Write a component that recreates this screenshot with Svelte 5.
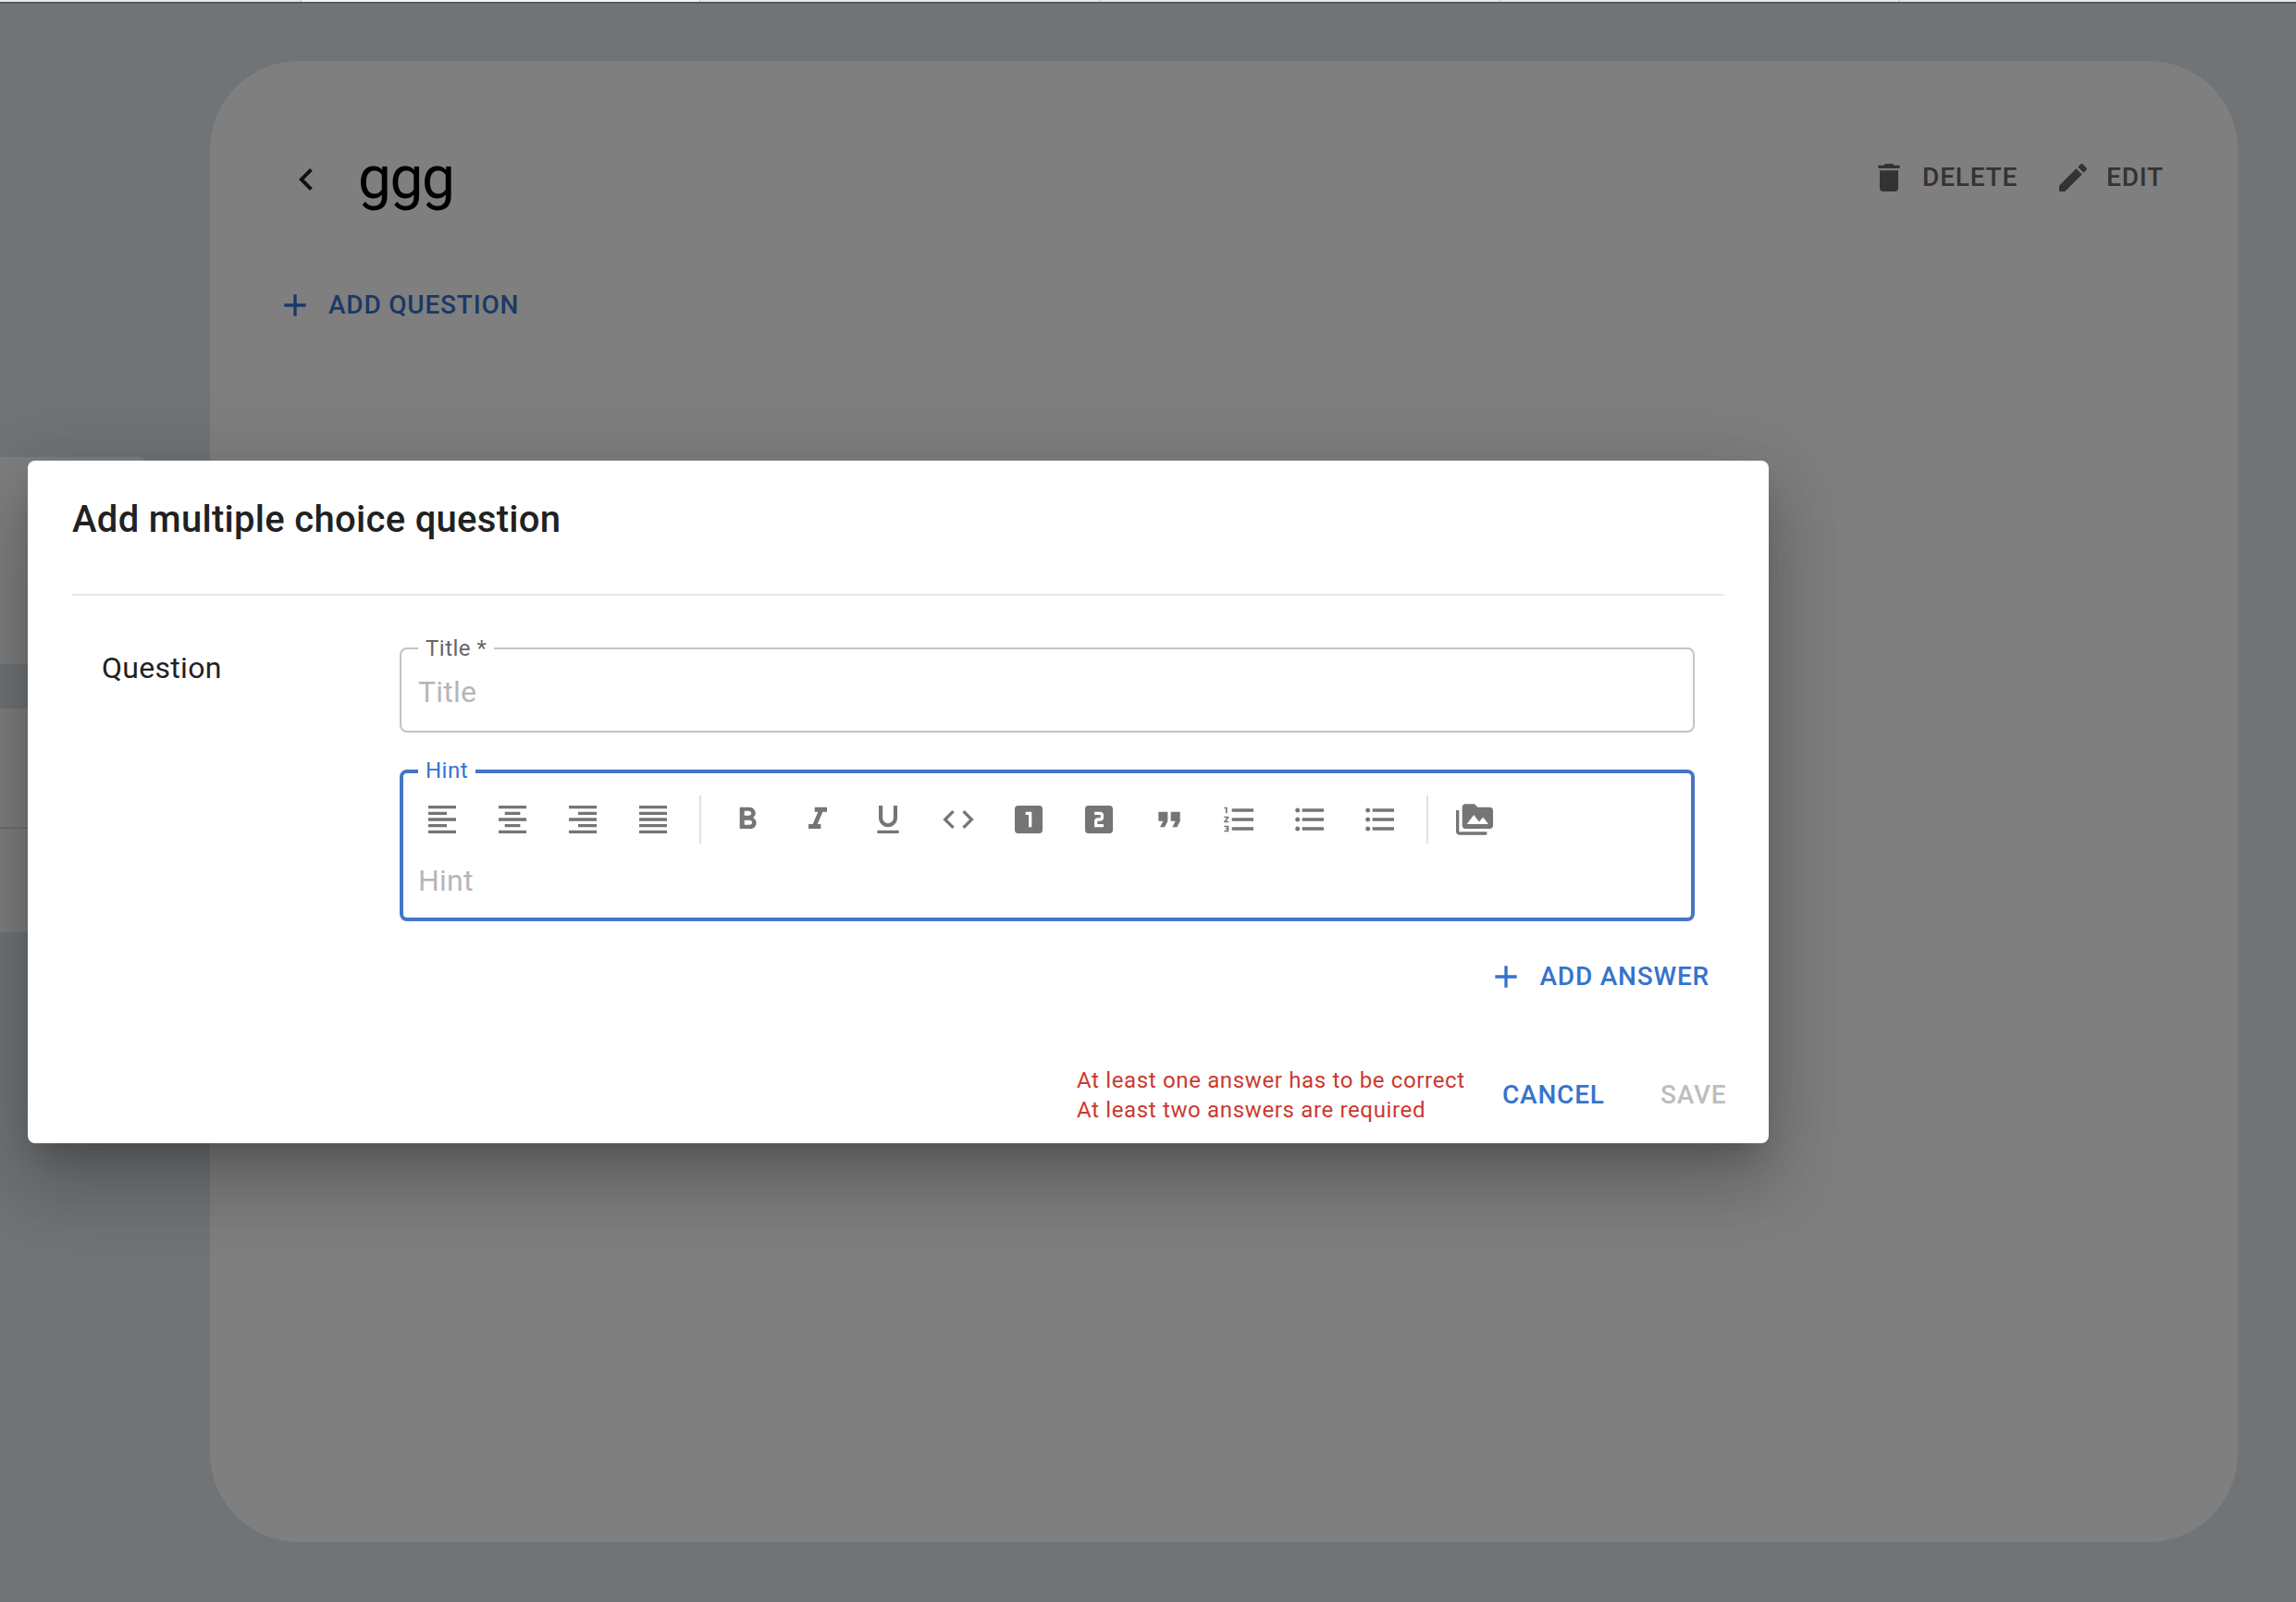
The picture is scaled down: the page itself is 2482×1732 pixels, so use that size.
<script>
  const icons = {
    back: 'M15.41 7.41 14 6l-6 6 6 6 1.41-1.41L10.83 12z',
    add: 'M19 13h-6v6h-2v-6H5v-2h6V5h2v6h6v2z',
    remove: 'M6 19c0 1.1.9 2 2 2h8c1.1 0 2-.9 2-2V7.4H6V19zM19 4h-3.5c-.5-.6-1-1-1.8-1h-3.4c-.8 0-1.3.4-1.8 1H5v2h14V4z',
    edit: 'M3 17.25V21h3.75L17.81 9.94l-3.75-3.75L3 17.25zM20.71 7.04c.39-.39.39-1.02 0-1.41l-2.34-2.34c-.39-.39-1.02-.39-1.41 0l-1.83 1.83 3.75 3.75 1.83-1.83z',
    media: 'M2 6H0v5h.01L0 20c0 1.1.9 2 2 2h18v-2H2V6zm20-2h-8l-2-2H6c-1.1 0-1.99.9-1.99 2L4 16c0 1.1.9 2 2 2h16c1.1 0 2-.9 2-2V6c0-1.1-.9-2-2-2zM7 15l4.5-6 3.5 4.51 2.5-3.01L21 15H7z'
  };
  const bullets = 'M4 10.5c-.83 0-1.5.67-1.5 1.5s.67 1.5 1.5 1.5 1.5-.67 1.5-1.5-.67-1.5-1.5-1.5zm0-6c-.83 0-1.5.67-1.5 1.5S3.17 7.5 4 7.5 5.5 6.83 5.5 6 4.83 4.5 4 4.5zm0 12c-.83 0-1.5.68-1.5 1.5s.68 1.5 1.5 1.5 1.5-.68 1.5-1.5-.67-1.5-1.5-1.5zM7 19h14v-2H7v2zm0-6h14v-2H7v2zm0-8v2h14V5H7z';
  const alignTools = [
    ['Align left', 'M15 15H3v2h12v-2zm0-8H3v2h12V7zM3 13h18v-2H3v2zm0 8h18v-2H3v2zM3 3v2h18V3H3z'],
    ['Align center', 'M7 15v2h10v-2H7zm-4 6h18v-2H3v2zm0-8h18v-2H3v2zm4-6v2h10V7H7zM3 3v2h18V3H3z'],
    ['Align right', 'M3 21h18v-2H3v2zm6-4h12v-2H9v2zm-6-4h18v-2H3v2zm6-4h12V7H9v2zM3 3v2h18V3H3z'],
    ['Justify', 'M3 21h18v-2H3v2zm0-4h18v-2H3v2zm0-4h18v-2H3v2zm0-4h18V7H3v2zm0-6v2h18V3H3z']
  ];
  const formatTools = [
    ['Bold', 'M15.6 10.79c.97-.67 1.65-1.77 1.65-2.79 0-2.26-1.75-4-4-4H7v14h7.04c2.09 0 3.71-1.7 3.71-3.79 0-1.52-.86-2.82-2.15-3.42zM10 6.5h3c.83 0 1.5.67 1.5 1.5s-.67 1.5-1.5 1.5h-3v-3zm3.5 9H10v-3h3.5c.83 0 1.5.67 1.5 1.5s-.67 1.5-1.5 1.5z'],
    ['Italic', 'M10 4v3h2.21l-3.42 8H6v3h8v-3h-2.21l3.42-8H18V4z'],
    ['Underline', 'M12 17c3.31 0 6-2.69 6-6V3h-2.5v8c0 1.93-1.57 3.5-3.5 3.5S8.5 12.93 8.5 11V3H6v8c0 3.31 2.69 6 6 6zm-7 2v2h14v-2H5z'],
    ['Code', 'M9.4 16.6 4.8 12l4.6-4.6L8 6l-6 6 6 6 1.4-1.4zm5.2 0 4.6-4.6-4.6-4.6L16 6l6 6-6 6-1.4-1.4z'],
    ['Heading 1', 'M19 3H5c-1.1 0-2 .9-2 2v14c0 1.1.9 2 2 2h14c1.1 0 2-.9 2-2V5c0-1.1-.9-2-2-2zm-5 14h-2V9h-2V7h4v10z'],
    ['Heading 2', 'M19 3H5c-1.1 0-2 .9-2 2v14c0 1.1.9 2 2 2h14c1.1 0 2-.9 2-2V5c0-1.1-.9-2-2-2zm-4 8c0 1.11-.9 2-2 2h-2v2h4v2H9v-4c0-1.11.9-2 2-2h2V9H9V7h4c1.1 0 2 .89 2 2v2z'],
    ['Quote', 'M6 17h3l2-4V7H5v6h3zm8 0h3l2-4V7h-6v6h3z'],
    ['Numbered list', 'M2 17h2v.5H3v1h1v.5H2v1h3v-4H2v1zm1-9h1V4H2v1h1v3zm-1 3h1.8L2 13.1v.9h3v-1H3.2L5 10.9V10H2v1zm5-6v2h14V5H7zm0 14h14v-2H7v2zm0-6h14v-2H7v2z'],
    ['Bulleted list', bullets],
    ['List', bullets]
  ];
  const errors = ['At least one answer has to be correct', 'At least two answers are required'];
</script>

{#snippet icon(d)}
  <svg class="icon" viewBox="0 0 24 24" aria-hidden="true"><path {d} /></svg>
{/snippet}

{#snippet tool(label, d)}
  <button class="tool" aria-label={label}>{@render icon(d)}</button>
{/snippet}

<div class="page">
  <div class="tabs"><i></i><i class="current"></i><i></i><i></i><i></i><i></i></div>
  <div class="content">
    <aside>
      <div class="panel first"></div>
      <div class="panel second"><hr /></div>
    </aside>
    <main>
      <header>
        <button class="back" aria-label="Back">{@render icon(icons.back)}</button>
        <h1>ggg</h1>
        <div class="actions">
          <button class="btn muted">{@render icon(icons.remove)}<span>DELETE</span></button>
          <button class="btn muted">{@render icon(icons.edit)}<span>EDIT</span></button>
        </div>
      </header>
      <button class="btn add-question">{@render icon(icons.add)}<span>ADD QUESTION</span></button>
    </main>
  </div>

  <div class="backdrop">
    <div class="dialog" role="dialog" aria-labelledby="dialog-title">
      <h2 id="dialog-title">Add multiple choice question</h2>
      <div class="body">
        <div class="section">Question</div>
        <div class="fields">
          <fieldset class="title">
            <legend>Title *</legend>
            <div class="placeholder">Title</div>
          </fieldset>
          <fieldset class="hint">
            <legend>Hint</legend>
            <div class="toolbar">
              {#each alignTools as [label, d]}{@render tool(label, d)}{/each}
              <span class="rule"></span>
              {#each formatTools as [label, d]}{@render tool(label, d)}{/each}
              <span class="rule"></span>
              {@render tool('Insert media', icons.media)}
            </div>
            <div class="placeholder">Hint</div>
          </fieldset>
        </div>
      </div>
      <div class="answer-row">
        <button class="btn">{@render icon(icons.add)}<span>ADD ANSWER</span></button>
      </div>
      <footer>
        <div class="errors">
          {#each errors as error}<div>{error}</div>{/each}
        </div>
        <button class="btn cancel">CANCEL</button>
        <button class="btn save" disabled>SAVE</button>
      </footer>
    </div>
  </div>
</div>

<style>
  :global(body) {
    margin: 0;
  }
  .page {
    position: relative;
    width: 2482px;
    height: 1732px;
    overflow: hidden;
    display: flex;
    flex-direction: column;
    background: #e0e9ef;
    font-family: Roboto, sans-serif;
  }
  .page * {
    box-sizing: border-box;
  }
  button {
    border: 0;
    padding: 0;
    background: none;
    font: inherit;
    color: inherit;
  }
  .icon {
    width: 40px;
    height: 40px;
    flex: none;
    fill: currentColor;
  }
  /* bottom edge of the tab strip */
  .tabs {
    height: 4px;
    flex: none;
    display: grid;
    grid-template-columns: 326px 432px 432px 432px 432px 1fr;
    border-bottom: 1px solid #c9c9cd;
    box-shadow: inset 0 -1px #4c4d50;
    background: #e6e9e7;
  }
  .tabs i {
    height: 2px;
    border-right: 2px solid #d3d6d6;
  }
  .tabs i.current {
    background: #f1f4f8;
  }
  .tabs i:last-child {
    border: 0;
  }
  .content {
    flex: 1;
    display: flex;
    align-items: flex-start;
  }
  aside {
    width: 227px;
    padding-top: 490px;
  }
  .panel {
    width: 158px;
    background: #fff;
  }
  .first {
    height: 224px;
    border-top-right-radius: 8px;
  }
  .second {
    height: 242px;
    margin-top: 48px;
    padding-top: 128px;
  }
  .second hr {
    margin: 0;
    border: 0;
    height: 2px;
    background: #e0e0e0;
  }
  main {
    width: 2192px;
    height: 1601px;
    margin-top: 62px;
    border-radius: 96px;
    background: #fff;
    padding: 88px 80px 0 72px;
  }
  header {
    display: flex;
    height: 80px;
    align-items: center;
  }
  .back {
    display: flex;
    width: 64px;
    justify-content: center;
    color: #222;
  }
  .back .icon {
    width: 48px;
    height: 48px;
  }
  h1 {
    margin: -3px 0 0 24px;
    font-size: 64px;
    line-height: 72px;
    font-weight: 400;
    letter-spacing: -1.5px;
    color: #000;
  }
  .actions {
    margin: -4px 0 0 auto;
    display: flex;
    gap: 40px;
  }
  .btn {
    display: flex;
    align-items: center;
    gap: 16px;
    font-size: 28px;
    line-height: 40px;
    font-weight: 500;
    letter-spacing: 0.8px;
    white-space: nowrap;
    color: #3673cd;
  }
  .muted {
    color: #666;
  }
  .add-question {
    margin: 76px 0 0;
  }
  .backdrop {
    position: absolute;
    inset: 3px 0 0;
    background: rgba(0, 0, 0, 0.5);
    padding: 495px 0 0 30px;
  }
  .dialog {
    width: 1882px;
    height: 738px;
    border-radius: 8px;
    background: #fff;
    color: #212121;
    display: flex;
    flex-direction: column;
    box-shadow:
      0 22px 30px -14px rgba(0, 0, 0, 0.2),
      0 48px 76px 6px rgba(0, 0, 0, 0.14),
      0 18px 92px 16px rgba(0, 0, 0, 0.12);
  }
  h2 {
    margin: 0 48px;
    height: 146px;
    padding-top: 32px;
    border-bottom: 2px solid #e5e7eb;
    font-size: 40px;
    line-height: 64px;
    font-weight: 500;
    letter-spacing: 0.3px;
  }
  .body {
    display: flex;
    padding: 56px 80px 0;
  }
  .section {
    width: 322px;
    flex: none;
    font-size: 32px;
    line-height: 44px;
    letter-spacing: 0.3px;
  }
  .fields {
    flex: 1;
  }
  fieldset {
    min-width: 0;
    margin: 0;
    border: 2px solid #c4c4c4;
    border-radius: 8px;
    padding: 0 18px;
  }
  legend {
    height: 2px;
    line-height: 3px;
    padding: 0 8px;
    font-size: 24px;
    letter-spacing: 0.5px;
    color: #666;
    white-space: nowrap;
  }
  .placeholder {
    font-size: 32px;
    line-height: 46px;
    letter-spacing: 0.2px;
    color: #b6b6b6;
  }
  .title {
    height: 92px;
  }
  .title .placeholder {
    padding-top: 23px;
  }
  .hint {
    height: 164px;
    margin-top: 40px;
    border: 4px solid #4475c7;
    padding: 0 16px;
  }
  .hint legend {
    height: 4px;
    line-height: 3px;
    color: #3673cd;
  }
  .toolbar {
    display: flex;
    align-items: center;
    height: 52px;
    margin: 24px 0 0 -12px;
  }
  .tool {
    width: 76px;
    height: 52px;
    display: flex;
    align-items: center;
    justify-content: center;
    color: #757575;
  }
  .rule {
    width: 2px;
    height: 52px;
    margin: 0 12px;
    background: #e0e0e0;
  }
  .hint .placeholder {
    padding-top: 17px;
  }
  .answer-row {
    display: flex;
    justify-content: flex-end;
    padding: 40px 64px 0 0;
  }
  footer {
    display: flex;
    align-items: center;
    margin-top: 76px;
    padding-left: 1134px;
  }
  .errors {
    width: 460px;
    font-size: 24px;
    line-height: 32px;
    letter-spacing: 0.65px;
    color: #cb392f;
    white-space: nowrap;
  }
  .cancel {
    width: 171px;
  }
  .save {
    color: #bdbdbd;
  }
</style>
